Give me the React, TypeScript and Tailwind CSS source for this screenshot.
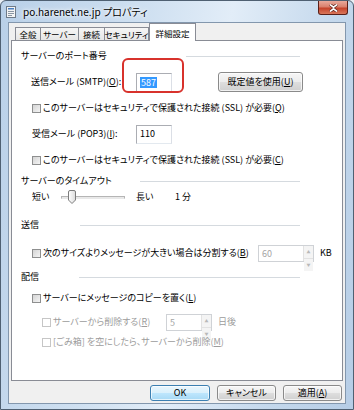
import React from 'react';

const U = ({ children }: { children: React.ReactNode }) => <span className="underline">{children}</span>;

const Check = ({ disabled }: { disabled?: boolean }) => (
  <span
    className={
      disabled
        ? 'inline-block w-[9px] h-[9px] shrink-0 border border-[#c6c6c6] bg-white'
        : 'inline-block w-[9px] h-[9px] shrink-0 border border-[#8e8f8f] bg-[linear-gradient(135deg,#d4d4d4,#f4f4f4)]'
    }
  />
);

const GroupHeader = ({ label, labelWidth }: { label: string; labelWidth: string }) => (
  <div className="flex items-center h-[16px] pr-[42px]">
    <span className={labelWidth}>{label}</span>
    <div className="flex-1 h-px bg-[#d5dadf]" />
  </div>
);

const Spin = ({ value, width }: { value: string; width: string }) => (
  <div className={`${width} h-[17px] border border-[#cfd2d6] bg-white flex items-stretch`}>
    <span className="flex-1 pl-[3px] text-[#a5a5a5] leading-[15px]">{value}</span>
    <div className="w-[10px] flex flex-col border-l border-[#e2e2e2]">
      <div className="flex-1 flex items-center justify-center text-[4px] text-[#b8b8b8] bg-[#f4f4f4] border-b border-[#e2e2e2]">▲</div>
      <div className="flex-1 flex items-center justify-center text-[4px] text-[#b8b8b8] bg-[#f4f4f4]">▼</div>
    </div>
  </div>
);

const WinButton = ({ children, width, primary }: { children: React.ReactNode; width: string; primary?: boolean }) => (
  <div
    className={`${width} ${
      primary
        ? 'border-[#3c7fb1] bg-[linear-gradient(#eaf6fd_0%,#d9f0fc_50%,#bee6fd_50%,#a7d9f5_100%)]'
        : 'border-[#8a8a8a] bg-[linear-gradient(#f6f6f6_0%,#ececec_50%,#dedede_50%,#d0d0d0_100%)]'
    } border rounded-[3px] flex items-center justify-center shadow-[inset_0_0_0_1px_rgba(255,255,255,0.7)]`}
  >
    {children}
  </div>
);

const Tab = ({ label, width }: { label: string; width: string }) => (
  <div className={`${width} h-[13px] -mr-px border border-b-0 border-[#898c95] bg-[linear-gradient(#f6f6f6,#e6e6e6)] flex items-center justify-center whitespace-nowrap`}>
    {label}
  </div>
);

export default function App() {
  return (
    <div className="w-[354px] h-[410px] bg-[#e9eef4]">
      <div className="w-[354px] h-[410px] rounded-t-[6px] border border-[#4f6072] bg-[linear-gradient(100deg,#b9d0e8_0%,#cfe0f1_35%,#e2edf8_55%,#c4d8ec_80%,#b6cde6_100%)] flex flex-col font-['Noto_Sans_CJK_JP','Noto_Sans',sans-serif] [font-feature-settings:'palt'] text-[9px] leading-[12px] text-black">
        {/* title bar */}
        <div className="h-[21px] flex items-start shrink-0">
          <svg className="mt-[5px] ml-[5px]" width="11" height="12" viewBox="0 0 11 12">
            <rect x="0.5" y="0.5" width="9" height="11" fill="#f4f4f4" stroke="#6f7b88" />
            <rect x="2" y="2" width="6" height="1.5" fill="#4a7fbf" />
            <line x1="2" y1="5.5" x2="8" y2="5.5" stroke="#8a96a3" />
            <line x1="2" y1="7.5" x2="8" y2="7.5" stroke="#8a96a3" />
            <line x1="2" y1="9.5" x2="6" y2="9.5" stroke="#8a96a3" />
          </svg>
          <span className="ml-[6px] mt-[4px] text-[10px] leading-[14px] [text-shadow:0_0_6px_#fff,0_0_3px_#fff]">
            po.harenet.ne.jp プロパティ
          </span>
          <div className="ml-auto mr-[5px] w-[30px] h-[14px] border border-t-0 border-[#5a2019] rounded-b-[3px] bg-[linear-gradient(#e9a99b_0%,#d9806d_45%,#c5432b_55%,#d9775a_100%)] flex items-center justify-center">
            <svg width="9" height="8" viewBox="0 0 9 8">
              <path d="M1 0.5 L4.5 3.2 L8 0.5 M1 7.5 L4.5 4.8 L8 7.5" stroke="#5a2019" strokeWidth="3" fill="none" />
              <path d="M1 0.5 L4.5 3.2 L8 0.5 M1 7.5 L4.5 4.8 L8 7.5" stroke="#ffffff" strokeWidth="1.6" fill="none" />
            </svg>
          </div>
        </div>

        {/* client */}
        <div className="mx-[7px] w-[338px] h-[382px] border border-[#8397ad] bg-[#f0f0f0] flex flex-col">
          {/* tabs */}
          <div className="h-[17px] flex items-end pl-[6px] relative z-10 text-[8.5px]">
            <Tab label="全般" width="w-[26px]" />
            <Tab label="サーバー" width="w-[39px]" />
            <Tab label="接続" width="w-[27px]" />
            <Tab label="セキュリティ" width="w-[45px]" />
            <div className="w-[47px] h-[18px] -mb-px ml-px border border-b-0 border-[#898c95] bg-white flex items-center justify-center pt-[1px]">
              詳細設定
            </div>
          </div>

          {/* panel */}
          <div className="mx-[2px] h-[341px] border border-[#898c95] bg-white relative flex flex-col pl-[9px]">
            <div className="mt-[7px]">
              <GroupHeader label="サーバーのポート番号" labelWidth="w-[165px]" />
            </div>

            <div className="mt-[10px] h-[16px] flex items-center pl-[10px]">
              <span className="w-[105px]">
                送信メール (SMTP)(<U>O</U>):
              </span>
              <div className="w-[36px] h-[19px] border border-[#abadb3] border-b-[#e3e9ef] border-r-[#dbdfe6] bg-white flex items-center pl-[3px]">
                <span className="bg-[#3399ff] text-white px-px leading-[11px]">587</span>
              </div>
              <div className="ml-[46px]">
                <WinButton width="w-[85px] h-[20px]">
                  既定値を使用(<U>U</U>)
                </WinButton>
              </div>
            </div>

            <div className="mt-[10px] h-[16px] flex items-center gap-[2px] pl-[11px]">
              <Check />
              <span>
                このサーバーはセキュリティで保護された接続 (SSL) が必要(<U>Q</U>)
              </span>
            </div>

            <div className="mt-[10px] h-[16px] flex items-center pl-[11px]">
              <span className="w-[104px]">
                受信メール (POP3)(<U>I</U>):
              </span>
              <div className="w-[36px] h-[19px] border border-[#abadb3] border-b-[#e3e9ef] border-r-[#dbdfe6] bg-white flex items-center pl-[3px]">
                110
              </div>
            </div>

            <div className="mt-[10px] h-[16px] flex items-center gap-[2px] pl-[11px]">
              <Check />
              <span>
                このサーバーはセキュリティで保護された接続 (SSL) が必要(<U>C</U>)
              </span>
            </div>

            <div className="mt-[5px]">
              <GroupHeader label="サーバーのタイムアウト" labelWidth="w-[119px]" />
            </div>

            <div className="h-[16px] flex items-center pl-[11px]">
              <span className="w-[29px]">短い</span>
              <div className="relative w-[64px] h-[14px] flex items-center">
                <div className="w-full h-[3px] border border-[#b5b5b5] border-b-[#e8e8e8] bg-[#e9e9e9]" />
                <svg className="absolute left-[7px] top-0" width="8" height="14" viewBox="0 0 8 14">
                  <defs>
                    <linearGradient id="th" x1="0" y1="0" x2="1" y2="0">
                      <stop offset="0" stopColor="#ffffff" />
                      <stop offset="1" stopColor="#dcdcdc" />
                    </linearGradient>
                  </defs>
                  <path d="M0.5 2 Q0.5 0.5 2 0.5 H6 Q7.5 0.5 7.5 2 V10 L4 13.5 L0.5 10 Z" fill="url(#th)" stroke="#7d7d7d" />
                </svg>
              </div>
              <span className="ml-[11px] w-[39px]">長い</span>
              <span>1 分</span>
            </div>

            <div className="mt-[12px]">
              <GroupHeader label="送信" labelWidth="w-[59px]" />
            </div>

            <div className="mt-[12px] h-[16px] flex items-center pl-[11px]">
              <Check />
              <span className="ml-[2px] w-[215px]">
                次のサイズよりメッセージが大きい場合は分割する(<U>B</U>)
              </span>
              <Spin value="60" width="w-[56px]" />
              <span className="ml-[6px]">KB</span>
            </div>

            <div className="mt-[8px]">
              <GroupHeader label="配信" labelWidth="w-[58px]" />
            </div>

            <div className="mt-[5px] h-[16px] flex items-center gap-[2px] pl-[11px]">
              <Check />
              <span>
                サーバーにメッセージのコピーを置く(<U>L</U>)
              </span>
            </div>

            <div className="mt-[8px] h-[16px] flex items-center pl-[21px] text-[#9c9c9c]">
              <Check disabled />
              <span className="ml-[2px] w-[113px]">
                サーバーから削除する(<U>R</U>)
              </span>
              <Spin value="5" width="w-[46px]" />
              <span className="ml-[6px]">日後</span>
            </div>

            <div className="mt-[4px] h-[16px] flex items-center gap-[2px] pl-[21px] text-[#9c9c9c]">
              <Check disabled />
              <span>
                [ごみ箱] を空にしたら、サーバーから削除(<U>M</U>)
              </span>
            </div>

            {/* red highlight annotation */}
            <div className="absolute left-[110px] top-[17px] w-[62px] h-[35px] border-2 border-[#d8322c] rounded-[6px]" />
          </div>

          {/* buttons */}
          <div className="flex-1 flex items-center justify-end gap-[7px] pr-[3px] pt-[1px]">
            <WinButton width="w-[60px] h-[16px]" primary>
              OK
            </WinButton>
            <WinButton width="w-[59px] h-[16px]">キャンセル</WinButton>
            <WinButton width="w-[59px] h-[16px]">
              適用(<U>A</U>)
            </WinButton>
          </div>
        </div>
      </div>
    </div>
  );
}
